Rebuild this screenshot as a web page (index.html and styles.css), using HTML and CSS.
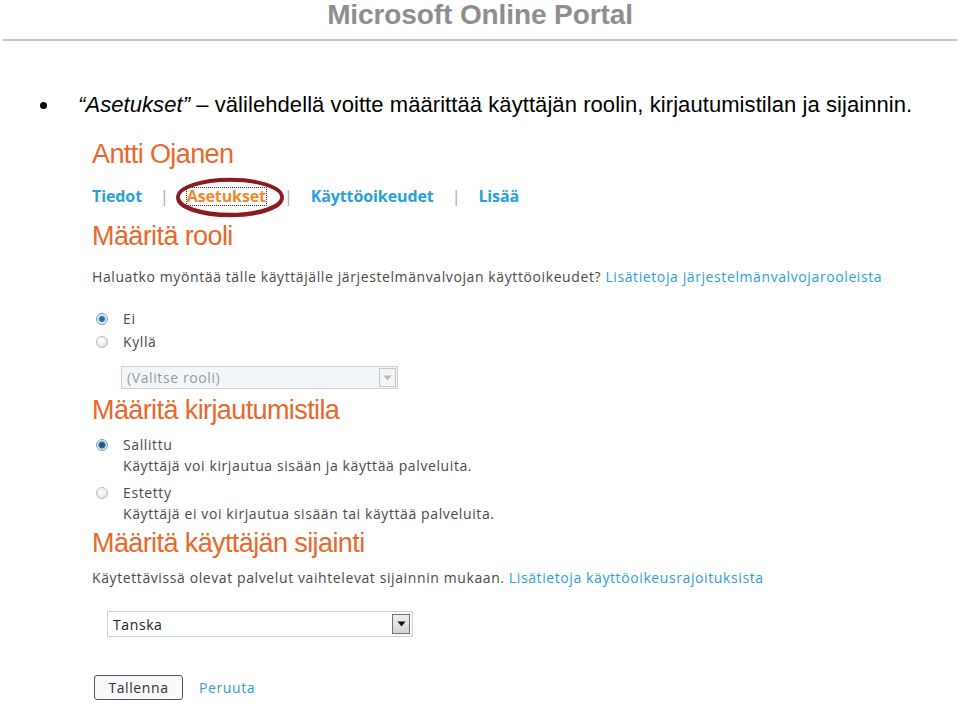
FILE: index.html
```html
<!DOCTYPE html>
<html lang="fi">
<head>
<meta charset="utf-8">
<title>Microsoft Online Portal</title>
<link rel="stylesheet" href="styles.css">
</head>
<body>
<header class="doc-head">
  <h1 class="doc-title">Microsoft Online Portal</h1>
</header>
<div class="bullet-row">
  <span class="bullet"></span>
  <p class="bullet-text"><em>“Asetukset”</em> – välilehdellä voitte määrittää käyttäjän roolin, kirjautumistilan ja sijainnin.</p>
</div>
<section class="shot">
  <h2 class="user-name">Antti Ojanen</h2>
  <nav class="tabs">
    <a class="tab">Tiedot</a>
    <span class="sep">|</span>
    <span class="tab-wrap">
      <a class="tab active">Asetukset</a>
      <svg class="ring" width="112" height="43" viewBox="0 0 112 43">
        <ellipse cx="56" cy="21" rx="52" ry="17.5" fill="none" stroke="#8a1c1f" stroke-width="3.5"/>
        <ellipse cx="56" cy="22.2" rx="52.5" ry="17.8" fill="none" stroke="#8a1c1f" stroke-width="2.5"/>
      </svg>
    </span>
    <span class="sep">|</span>
    <a class="tab">Käyttöoikeudet</a>
    <span class="sep">|</span>
    <a class="tab">Lisää</a>
  </nav>

  <h2 class="sect sect-role">Määritä rooli</h2>
  <p class="info">Haluatko myöntää tälle käyttäjälle järjestelmänvalvojan käyttöoikeudet? <a class="link">Lisätietoja järjestelmänvalvojarooleista</a></p>
  <div class="radios radios-role">
    <div class="radio-line"><span class="radio checked"></span><span class="label">Ei</span></div>
    <div class="radio-line"><span class="radio"></span><span class="label">Kyllä</span></div>
  </div>
  <div class="select select-role disabled">
    <span class="select-text">(Valitse rooli)</span>
    <span class="select-btn"><svg width="9" height="6" viewBox="0 0 9 6"><path d="M0.5 0.5 H8.5 L4.5 5.5 Z" fill="#b8b8b8"/></svg></span>
  </div>

  <h2 class="sect sect-login">Määritä kirjautumistila</h2>
  <div class="radios radios-login">
    <div class="radio-line"><span class="radio checked dark"></span><span class="label">Sallittu</span></div>
    <p class="desc">Käyttäjä voi kirjautua sisään ja käyttää palveluita.</p>
    <div class="radio-line second"><span class="radio"></span><span class="label">Estetty</span></div>
    <p class="desc">Käyttäjä ei voi kirjautua sisään tai käyttää palveluita.</p>
  </div>

  <h2 class="sect sect-loc">Määritä käyttäjän sijainti</h2>
  <p class="info info-loc">Käytettävissä olevat palvelut vaihtelevat sijainnin mukaan. <a class="link">Lisätietoja käyttöoikeusrajoituksista</a></p>
  <div class="select select-loc">
    <span class="select-text">Tanska</span>
    <span class="select-btn"><svg width="9" height="6" viewBox="0 0 9 6"><path d="M0.5 0.5 H8.5 L4.5 5.5 Z" fill="#111"/></svg></span>
  </div>

  <div class="actions">
    <button class="btn">Tallenna</button>
    <a class="link cancel">Peruuta</a>
  </div>
</section>
</body>
</html>
```

FILE: styles.css
```css
html, body {
  margin: 0;
  padding: 0;
  background: #ffffff;
}
body {
  width: 959px;
  height: 703px;
  overflow: hidden;
  font-family: "Liberation Sans", Arial, sans-serif;
}
.doc-head {
  margin: 0 2px 0 3px;
  border-bottom: 2px solid #c9c9c9;
  height: 39px;
  display: flex;
  justify-content: center;
}
.doc-title {
  margin: 0;
  font-size: 28px;
  line-height: 30px;
  font-weight: bold;
  color: #8e8e8e;
  letter-spacing: -0.1px;
}
.bullet-row {
  display: flex;
  align-items: center;
  margin-top: 51px;
  padding-left: 40px;
  color: #000;
}
.bullet {
  width: 7px;
  height: 7px;
  border-radius: 50%;
  background: #000;
  margin-right: 31px;
}
.bullet-text {
  margin: 0;
  font-size: 22px;
  line-height: 26px;
  letter-spacing: 0.07px;
}
.bullet-text em {
  font-style: italic;
}
.shot {
  padding-left: 92px;
  margin-top: 21px;
  font-family: "Open Sans", "Noto Sans", sans-serif;
  font-size: 14px;
  letter-spacing: 0.6px;
  color: #4a4a4a;
}
.user-name, .sect {
  margin: 0;
  font-family: "Liberation Sans", Arial, sans-serif;
  font-weight: normal;
  font-size: 27px;
  line-height: 30px;
  color: #e8682b;
  letter-spacing: -0.6px;
}
.tabs {
  display: flex;
  align-items: center;
  height: 30px;
  margin-top: 12px;
  font-weight: bold;
  font-size: 16px;
  letter-spacing: -0.1px;
}
.tab {
  color: #2a9fd8;
}
.tab.active {
  color: #ef8a2d;
  outline: 1px dotted #333;
  outline-offset: 0;
  line-height: 17px;
}
.tab-wrap {
  position: relative;
  display: inline-flex;
}
.ring {
  position: absolute;
  left: -13px;
  top: -12px;
}
.sep {
  color: #a8a8a8;
  font-weight: normal;
  margin: 0 18px;
}
.sect-role {
  margin-top: 10px;
}
.info {
  margin: 16px 0 0;
  line-height: 20px;
}
.link {
  color: #2a9fd8;
}
.radios-role {
  margin-top: 20px;
}
.radio-line {
  display: flex;
  align-items: center;
  height: 23px;
  padding-left: 4px;
}
.radio {
  width: 12px;
  height: 12px;
  border-radius: 50%;
  border: 1px solid #b9b9b9;
  background: radial-gradient(circle at 40% 35%, #ffffff 0%, #ececec 60%, #d6d6d6 100%);
  box-sizing: border-box;
  margin-right: 15px;
  flex: none;
}
.radio.checked {
  border-color: #7b9cb8;
  background: radial-gradient(circle at 50% 50%, #2b5b85 0%, #3b79a8 35%, #e3edf5 55%, #f6f9fb 100%);
}
.radio.checked.dark {
  background: radial-gradient(circle at 50% 50%, #14466f 0%, #2a6d9c 42%, #dfe8f0 58%, #f4f7fa 100%);
}
.label {
  line-height: 20px;
}
.select {
  display: flex;
  align-items: center;
  justify-content: space-between;
  box-sizing: border-box;
  border: 1px solid #c9d3dc;
  padding-left: 5px;
}
.select-role {
  width: 277px;
  height: 23px;
  margin: 13px 0 0 29px;
  background: #f2f6fa;
  color: #9a9a9a;
}
.select-btn {
  width: 17px;
  height: 19px;
  margin-right: 1px;
  box-sizing: border-box;
  border: 1px solid #c8c8c8;
  background: #f4f4f4;
  display: flex;
  align-items: center;
  justify-content: center;
}
.sect-login {
  margin-top: 6px;
}
.radios-login {
  margin-top: 8px;
}
.desc {
  margin: 0;
  padding-left: 31px;
  line-height: 20px;
  height: 22px;
}
.radio-line.second {
  margin-top: 3px;
}
.sect-loc {
  margin-top: 2px;
}
.info-loc {
  margin-top: 10px;
}
.select-loc {
  width: 306px;
  height: 26px;
  margin: 23px 0 0 15px;
  border-color: #c8d2da;
  color: #222;
}
.select-loc .select-btn {
  border-color: #707070;
  background: linear-gradient(#f0f0f0, #d4d4d4);
  width: 18px;
  height: 20px;
  margin-right: 2px;
}
.actions {
  display: flex;
  align-items: center;
  margin-top: 38px;
  padding-left: 2px;
}
.btn {
  font-family: "Open Sans", "Noto Sans", sans-serif;
  font-size: 14px;
  letter-spacing: 0.6px;
  color: #333;
  width: 89px;
  height: 25px;
  border: 1px solid #555;
  border-radius: 3px;
  background: #f7f9fb;
  padding: 0;
}
.cancel {
  margin-left: 16px;
}
```
